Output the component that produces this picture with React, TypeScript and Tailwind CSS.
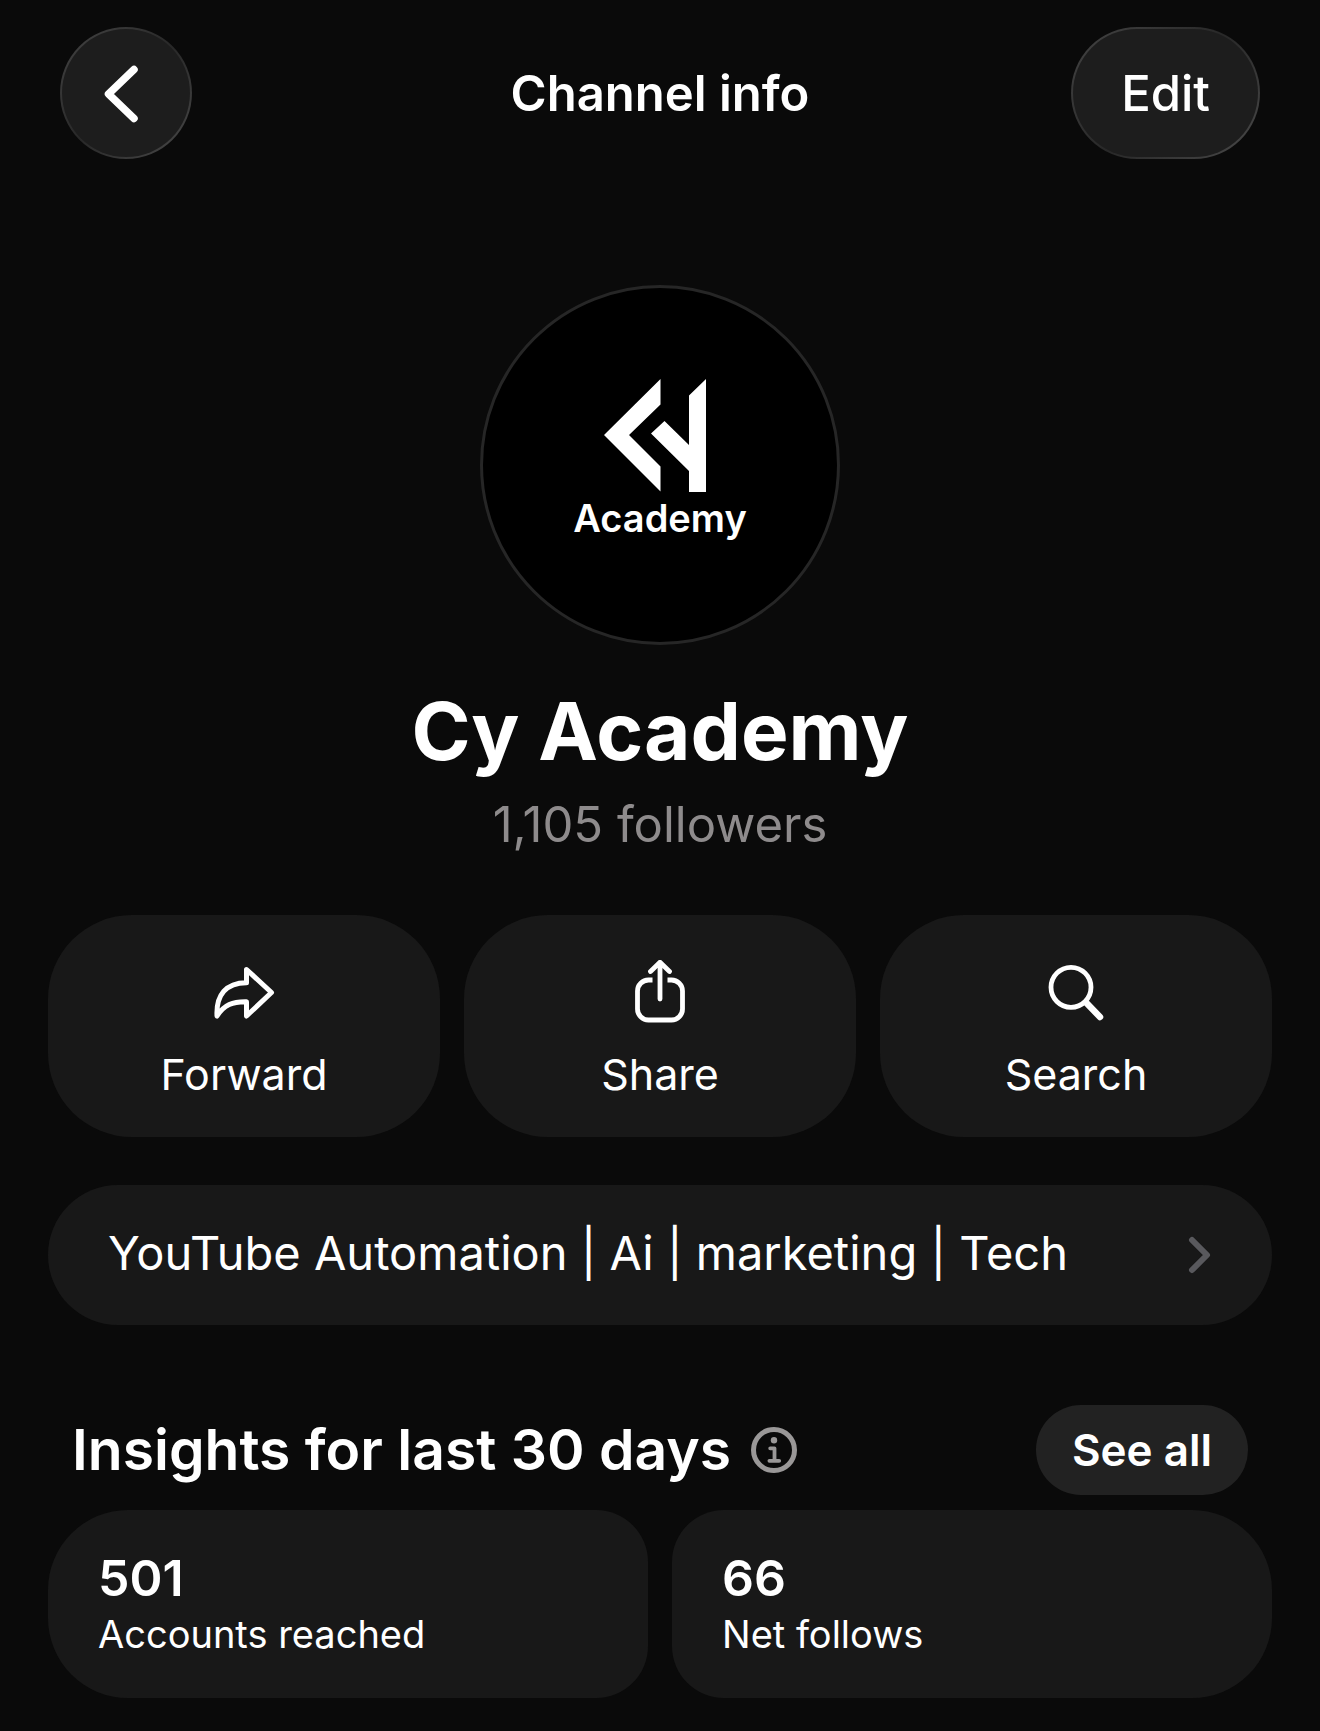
import type { ReactNode } from "react";

type Action = { label: string; icon: ReactNode };
type Stat = { value: string; label: string; shape: string };

const ForwardIcon = () => (
  <svg
    viewBox="23 20 64 64"
    className="size-16"
    fill="none"
    stroke="currentColor"
    strokeWidth="5"
    strokeLinejoin="round"
    aria-hidden="true"
  >
    <path d="M57.5 29.500 82.500 52.500 57.500 76V61.700C44 61.400 35 64.500 28 76 27 55 37 42.700 57.500 42.700Z" />
  </svg>
);

const ShareIcon = () => (
  <svg
    viewBox="18 20 64 64"
    className="size-16"
    fill="none"
    stroke="currentColor"
    strokeWidth="4.8"
    aria-hidden="true"
  >
    <path d="M42.5 40H38.5a11 11 0 0 0-11 11V69a11 11 0 0 0 11 11H61.5a11 11 0 0 0 11-11V51a11 11 0 0 0-11-11H57.5" />
    <path
      d="M50 59V22.5M40.5 31.5 50 22.2l9.5 9.3"
      strokeLinecap="round"
      strokeLinejoin="round"
    />
  </svg>
);

const SearchIcon = () => (
  <svg
    viewBox="14 20 64 64"
    className="size-16"
    fill="none"
    stroke="currentColor"
    strokeLinecap="round"
    aria-hidden="true"
  >
    <circle cx="41" cy="47.3" r="20" strokeWidth="4.8" />
    <path d="M56.500 63 70 77" strokeWidth="6.5" />
  </svg>
);

const InfoIcon = () => (
  <svg viewBox="0 0 46 46" className="size-[46px]" fill="none" aria-hidden="true">
    <circle cx="23" cy="23" r="20.5" stroke="currentColor" strokeWidth="5" />
    <circle cx="23" cy="13.2" r="3.2" fill="currentColor" />
    <path
      d="M19.2 21.3h4.3v12.5M18.4 33.8h9.8"
      stroke="currentColor"
      strokeWidth="3.8"
      strokeLinecap="round"
      strokeLinejoin="round"
    />
  </svg>
);

const actions: Action[] = [
  { label: "Forward", icon: <ForwardIcon /> },
  { label: "Share", icon: <ShareIcon /> },
  { label: "Search", icon: <SearchIcon /> },
];

const stats: Stat[] = [
  {
    value: "501",
    label: "Accounts reached",
    shape: "rounded-l-[80px] rounded-r-[52px]",
  },
  {
    value: "66",
    label: "Net follows",
    shape: "rounded-l-[52px] rounded-r-[80px]",
  },
];

// glass rim: lit on the top left and bottom right, dim on the other two corners
const glass =
  "h-[132px] rounded-full border-2 border-transparent [background:linear-gradient(#1d1d1d,#1d1d1d)_padding-box,linear-gradient(135deg,#444,#282828_50%,#4a4a4a)_border-box]";

function Header() {
  return (
    <header className="grid grid-cols-[1fr_auto_1fr] items-center px-3">
      <button
        aria-label="Back"
        className={`flex w-[132px] items-center justify-center ${glass}`}
      >
        <svg viewBox="0 0 64 64" className="size-16" fill="none" aria-hidden="true">
          <path
            d="M40 8.500 14.500 33 40 57.500"
            stroke="currentColor"
            strokeWidth="7.5"
            strokeLinecap="round"
            strokeLinejoin="round"
          />
        </svg>
      </button>
      <h1 className="pt-0.5 text-[49px] leading-[60px] font-semibold">Channel info</h1>
      <button
        className={`justify-self-end px-12 pt-0.5 text-[49px] leading-[60px] font-medium ${glass}`}
      >
        Edit
      </button>
    </header>
  );
}

function Avatar() {
  return (
    <div className="flex size-[360px] flex-col items-center rounded-full border-3 border-[#262626] bg-black pt-[90px]">
      <svg
        viewBox="134 108 112 115"
        className="h-[115px] w-28"
        fill="#fff"
        aria-hidden="true"
      >
        <path d="M190.500 109v25.500L159 165l31.500 31.500v25L134 165Z" />
        <path d="M236 109v113h-17v-21l-38-37.500 13.500-12.500L219 175v-49.500Z" />
      </svg>
      <span className="text-[38px] leading-[50px] font-semibold">Academy</span>
    </div>
  );
}

export default function App() {
  return (
    <main className="min-h-screen bg-[#0a0a0a] px-12 pt-[27px] pb-8 font-['Inter',sans-serif] text-white">
      <Header />

      <section className="mt-[126px] flex flex-col items-center">
        <Avatar />
        <h2 className="mt-[38px] text-[80px] leading-[96px] font-bold">
          Cy Academy
        </h2>
        <p className="mt-4 text-[49px] leading-[60px] text-[#8e8b8c]">
          1,105 followers
        </p>
      </section>

      <div className="mt-[60px] grid grid-cols-3 gap-6">
        {actions.map(({ label, icon }) => (
          <button
            key={label}
            className="flex flex-col items-center gap-[22px] rounded-[84px] bg-[#181818] pt-[45px] pb-[35px] text-[43px] leading-[56px]"
          >
            {icon}
            {label}
          </button>
        ))}
      </div>

      <button className="mt-12 flex w-full items-center justify-between rounded-full bg-[#181818] px-[60px] py-[38px] text-left text-[47px] leading-[60px]">
        <span className="pb-1">YouTube Automation | Ai | marketing | Tech</span>
        <svg viewBox="0 0 24 40" className="h-10 w-6" fill="none" aria-hidden="true">
          <path
            d="M4 5 19 20 4 35"
            stroke="#59595d"
            strokeWidth="6"
            strokeLinecap="round"
            strokeLinejoin="round"
          />
        </svg>
      </button>

      <section className="mt-20">
        <div className="flex items-center px-6">
          <h3 className="text-[57px] leading-[72px] font-semibold">
            Insights for last 30 days
          </h3>
          <button aria-label="About insights" className="ml-5 text-[#9a9898]">
            <InfoIcon />
          </button>
          <button className="ml-auto h-[90px] rounded-full bg-[#222] px-9 text-[44px] leading-[60px] font-semibold">
            See all
          </button>
        </div>

        <div className="mt-[15px] grid grid-cols-2 gap-6">
          {stats.map(({ value, label, shape }) => (
            <div key={label} className={`bg-[#181818] px-[50px] pt-[38px] pb-[38px] ${shape}`}>
              <p className="text-[50px] leading-[60px] font-semibold">{value}</p>
              <p className="text-[38px] leading-[52px]">{label}</p>
            </div>
          ))}
        </div>
      </section>
    </main>
  );
}
